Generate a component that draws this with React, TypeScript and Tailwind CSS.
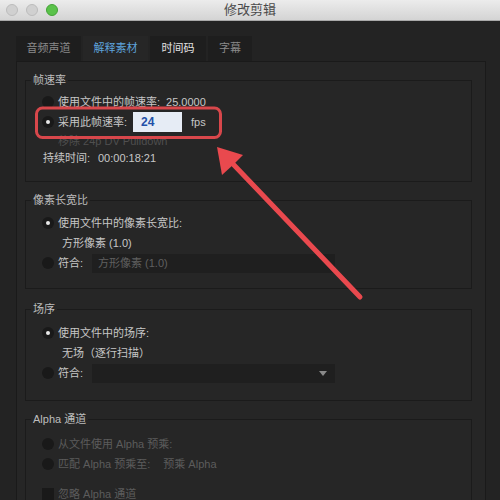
import React from "react";

const font = "font-['Liberation_Sans','Noto_Sans_CJK_SC',sans-serif]";

function Radio({ on }: { on?: boolean }) {
  return (
    <span className="w-3 h-3 rounded-full bg-[#191919] flex items-center justify-center shrink-0">
      {on && <span className="w-[4px] h-[4px] rounded-full bg-[#e8e8e8]" />}
    </span>
  );
}

function Check() {
  return <span className="w-3 h-3 bg-[#191919] shrink-0" />;
}

function Group({ title, className, children }: { title: string; className: string; children: React.ReactNode }) {
  return (
    <fieldset className={`border border-[#1b1b1b] pl-4 ${className}`}>
      <legend className="-ml-[11px] px-[2px] text-[11px] leading-[14px] text-[#bdbdbd]">{title}</legend>
      {children}
    </fieldset>
  );
}

function Dropdown({ text, arrow }: { text?: string; arrow?: boolean }) {
  return (
    <div className="w-[243px] h-[19px] bg-[#1f1f1f] flex items-center justify-between px-[6px]">
      <span className="text-[#5f5f5f]">{text}</span>
      {arrow && <span className="w-0 h-0 border-x-[4px] border-x-transparent border-t-[5px] border-t-[#8a8a8a] mr-[2px]" />}
    </div>
  );
}

const tabs = [
  { label: "音频声道", w: "w-[65px]", cls: "bg-[#1e1e1e] text-[#8a8a8a]" },
  { label: "解释素材", w: "w-[65px]", cls: "bg-[#262626] text-[#5ea3dc]" },
  { label: "时间码", w: "w-[56px]", cls: "bg-[#1e1e1e] text-[#e2e2e2]" },
  { label: "字幕", w: "w-[44px]", cls: "bg-[#1e1e1e] text-[#8a8a8a]" },
];

export default function App() {
  return (
    <div className={`relative w-[500px] h-[500px] overflow-hidden bg-[#232323] text-[11px] text-[#c6c6c6] ${font}`}>
      {/* title bar */}
      <div className="h-[21px] bg-gradient-to-b from-[#ececec] to-[#d4d4d4] border-b border-[#a9a9a9] flex items-center relative">
        <div className="flex gap-2 pl-[6px]">
          <span className="w-3 h-3 rounded-full bg-[#d0d0d0] border border-[#bcbcbc]" />
          <span className="w-3 h-3 rounded-full bg-[#d0d0d0] border border-[#bcbcbc]" />
          <span className="w-3 h-3 rounded-full bg-[#5ac24a] border border-[#44a337]" />
        </div>
        <div className="flex-1 text-center text-[13px] text-[#4a4a4a] pr-[58px]">修改剪辑</div>
      </div>

      <div className="pt-[15px] pl-4 pr-[14px]">
        <div className="flex gap-[2px] h-[25px]">
          {tabs.map((t) => (
            <div key={t.label} className={`${t.w} ${t.cls} flex items-center justify-center text-[11px]`}>
              {t.label}
            </div>
          ))}
        </div>

        <div className="border border-[#1a1a1a] bg-[#262626] pt-[11px] pl-[8px] pr-[13px] pb-6 flex flex-col gap-[11px]">
          <Group title="帧速率" className="pt-[5px] pb-[15px]">
            <div className="h-5 flex items-center gap-1">
              <Radio />
              <span>使用文件中的帧速率:</span>
              <span className="ml-[2px]">25.0000</span>
            </div>
            <div className="h-5 flex items-center gap-1">
              <Radio on />
              <span className="w-[71px]">采用此帧速率:</span>
              <div className="w-[49px] h-5 bg-[#e6ecf5] flex items-center pl-2 text-[#2250a8] text-[12px] font-semibold">24</div>
              <span className="ml-[5px]">fps</span>
            </div>
            <div className="h-[18px] flex items-center pl-4 text-[#4f4f4f]">移除 24p DV Pulldown</div>
            <div className="h-4 flex items-center pl-px">
              <span className="w-[55px]">持续时间:</span>
              <span>00:00:18:21</span>
            </div>
          </Group>

          <Group title="像素长宽比" className="pt-[6px] pb-[15px]">
            <div className="h-5 flex items-center gap-1">
              <Radio on />
              <span>使用文件中的像素长宽比:</span>
            </div>
            <div className="h-5 flex items-center pl-5">方形像素 (1.0)</div>
            <div className="h-5 flex items-center gap-1">
              <Radio />
              <span className="w-[30px]">符合:</span>
              <Dropdown text="方形像素 (1.0)" />
            </div>
          </Group>

          <Group title="场序" className="mt-[2px] pt-[7px] pb-[17px]">
            <div className="h-5 flex items-center gap-1">
              <Radio on />
              <span>使用文件中的场序:</span>
            </div>
            <div className="h-5 flex items-center pl-5">无场（逐行扫描）</div>
            <div className="h-5 flex items-center gap-1">
              <Radio />
              <span className="w-[30px]">符合:</span>
              <Dropdown arrow />
            </div>
          </Group>

          <Group title="Alpha 通道" className="pt-[8px] pb-[15px]">
            <div className="h-5 flex items-center gap-1 text-[#5c5c5c]">
              <Radio />
              <span>从文件使用 Alpha 预乘:</span>
            </div>
            <div className="h-5 flex items-center gap-1 text-[#5c5c5c]">
              <Radio />
              <span>匹配 Alpha 预乘至:</span>
              <span className="ml-[5px]"><Check /></span>
              <span>预乘 Alpha</span>
            </div>
            <div className="h-5 mt-[10px] flex items-center gap-1 text-[#5c5c5c]">
              <Check />
              <span>忽略 Alpha 通道</span>
            </div>
          </Group>
        </div>
      </div>

      {/* annotation: red box and arrow */}
      <svg className="absolute inset-0 pointer-events-none" width="500" height="500" viewBox="0 0 500 500">
        <rect x="36.5" y="108" width="184" height="29.5" rx="6" fill="none" stroke="#d8474b" strokeWidth="3" />
        <line x1="233" y1="164" x2="360" y2="297" stroke="#e9494e" strokeWidth="5" strokeLinecap="round" />
        <polygon points="217,147 243,155 234,164 222,175" fill="#e9494e" />
      </svg>
    </div>
  );
}
